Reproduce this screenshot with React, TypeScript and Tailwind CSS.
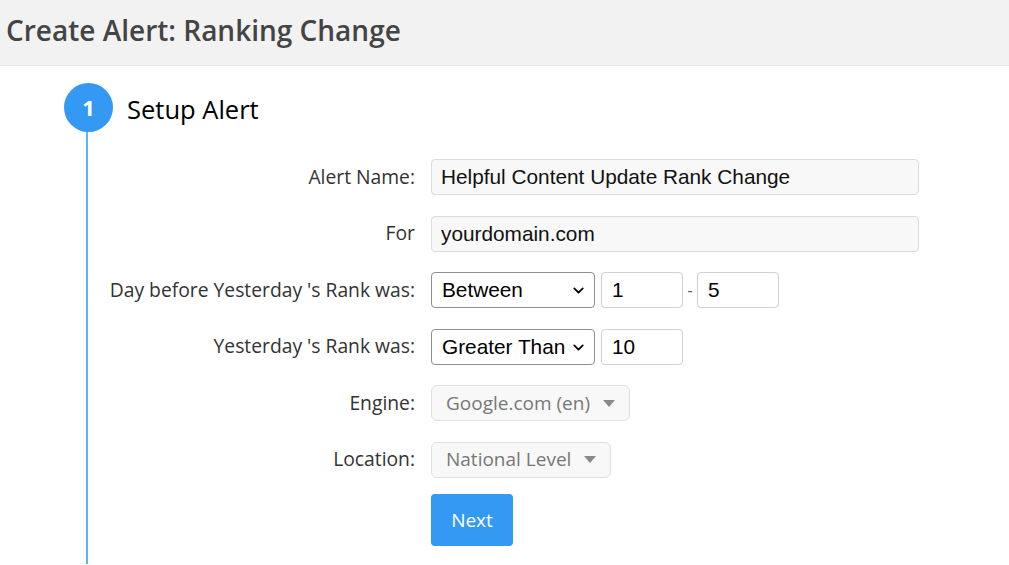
import { ChevronDown } from 'lucide-react';

const labelCls =
  'flex h-[36px] items-center justify-end whitespace-nowrap text-[19.3px] text-[#333]';

const arial = { fontFamily: '"Liberation Sans", Arial, sans-serif' };

function Caret() {
  return (
    <svg viewBox="0 0 12 7" className="h-[7px] w-[12px]" aria-hidden>
      <path d="M0 0h12L6 7z" fill="#8a8a8a" />
    </svg>
  );
}

function NativeSelect({ value, width }: { value: string; width: string }) {
  return (
    <div className={`relative h-[36px] ${width}`}>
      <select
        defaultValue={value}
        className="h-full w-full appearance-none rounded-[4px] border border-[#8f8f8f] bg-white pl-[10px] text-[20.8px] text-black outline-none"
        style={arial}
      >
        <option>Between</option>
        <option>Greater Than</option>
        <option>Less Than</option>
      </select>
      <ChevronDown
        className="pointer-events-none absolute right-[8px] top-[10px] h-[17px] w-[17px] text-black"
        strokeWidth={2.5}
      />
    </div>
  );
}

function NumInput({ value }: { value: string }) {
  return (
    <input
      defaultValue={value}
      className="h-[36px] w-[82px] rounded-[4px] border border-[#d0d0d0] bg-white px-[10px] text-[20.8px] text-black outline-none"
      style={arial}
    />
  );
}

function TextInput({ value }: { value: string }) {
  return (
    <input
      defaultValue={value}
      className="h-[36px] w-[488px] rounded-[4px] border border-[#dcdcdc] bg-[#f8f8f8] px-[9px] text-[20.8px] text-[#111] outline-none"
      style={arial}
    />
  );
}

function DisabledSelect({ value, width }: { value: string; width: string }) {
  return (
    <div
      className={`flex h-[36px] items-center justify-between rounded-[6px] border border-[#e0e0e0] bg-[#f8f8f8] pl-[14px] pr-[14px] text-[19px] text-[#777] ${width}`}
    >
      <span>{value}</span>
      <Caret />
    </div>
  );
}

export default function App() {
  return (
    <div
      className="min-h-[565px] bg-white"
      style={{ fontFamily: '"Open Sans", "Noto Sans", sans-serif' }}
    >
      <header className="flex h-[66px] items-center border-b border-[#e6e6e6] bg-[#f2f2f2] px-[6px] pb-[6px]">
        <h1 className="text-[28px] font-semibold text-[#444]">Create Alert: Ranking Change</h1>
      </header>

      <main className="flex pl-[64px] pt-[17px]">
        {/* step rail */}
        <div className="flex w-[49px] flex-col items-center">
          <div className="flex h-[49px] w-[49px] shrink-0 items-center justify-center rounded-full bg-[#3399f3] text-[22px] font-bold text-white">
            1
          </div>
          <div className="mr-[3px] w-[1.5px] flex-1 bg-[#5ab4fb]" />
        </div>

        <div className="ml-[14px] flex-1 pb-[18px]">
          <h2 className="flex h-[49px] items-center pt-[4px] text-[25.5px] text-black">Setup Alert</h2>

          <div className="ml-[-17px] mt-[27px] grid grid-cols-[305px_auto] gap-x-[16px] gap-y-[20.5px]">
            <div className={labelCls}>Alert Name:</div>
            <TextInput value="Helpful Content Update Rank Change" />

            <div className={labelCls}>For</div>
            <TextInput value="yourdomain.com" />

            <div className={labelCls}>Day before Yesterday 's Rank was:</div>
            <div className="flex items-center">
              <NativeSelect value="Between" width="w-[164px]" />
              <div className="ml-[6px]">
                <NumInput value="1" />
              </div>
              <span className="mx-[3px] w-[8px] text-center text-[16px] text-[#555]">-</span>
              <NumInput value="5" />
            </div>

            <div className={labelCls}>Yesterday 's Rank was:</div>
            <div className="flex items-center gap-[6px]">
              <NativeSelect value="Greater Than" width="w-[164px]" />
              <NumInput value="10" />
            </div>

            <div className={labelCls}>Engine:</div>
            <DisabledSelect value="Google.com (en)" width="w-[199px]" />

            <div className={labelCls}>Location:</div>
            <DisabledSelect value="National Level" width="w-[180px]" />

            <div />
            <div className="mt-[-4px]">
              <button
                type="button"
                className="h-[52px] w-[82px] rounded-[4px] bg-[#3399f3] text-[19px] text-white"
              >
                Next
              </button>
            </div>
          </div>
        </div>
      </main>
    </div>
  );
}
